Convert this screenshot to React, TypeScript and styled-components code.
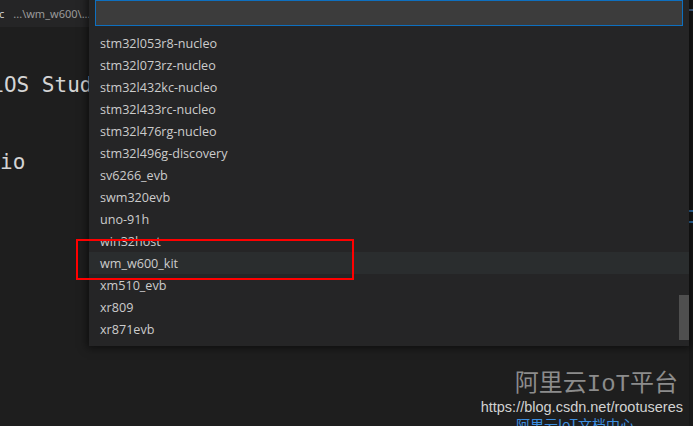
import React from "react";
import styled, { createGlobalStyle } from "styled-components";

const Global = createGlobalStyle`
  html, body { margin: 0; padding: 0; background: #1e1e1e; overflow: hidden; }
  #root { width: 693px; height: 426px; }
`;

const Screen = styled.div`
  position: relative;
  width: 693px;
  height: 426px;
  background: #1e1e1e;
  overflow: hidden;
  display: flex;
  flex-direction: column;
  font-family: "Segoe UI", "Open Sans", "Noto Sans", sans-serif;
`;

const TabBar = styled.div`
  height: 27px;
  flex: none;
  background: #252526;
  display: flex;
  align-items: center;
  font-family: "Noto Sans", sans-serif;
  font-size: 11px;
  white-space: nowrap;
  overflow: hidden;
`;

const TabName = styled.span`
  color: #d0d0d0;
  margin-left: -1px;
`;

const TabPath = styled.span`
  color: #9a9a9a;
  margin-left: 9px;
`;

const Editor = styled.div`
  flex: 1;
  display: flex;
  flex-direction: column;
  padding-top: 45px;
  gap: 51px;
  overflow: hidden;
`;

const CodeLine = styled.div<{ $indent: number }>`
  font-family: "DejaVu Sans Mono", monospace;
  font-size: 21px;
  line-height: 26px;
  color: #d4d4d4;
  white-space: pre;
  margin-left: ${(p) => p.$indent}px;
`;

const Strip = styled.div`
  position: absolute;
  right: 0;
  top: 0;
  width: 4px;
  height: 100%;
  background: #191919;
`;

const StripMark = styled.div<{ $top: number; $color: string }>`
  position: absolute;
  left: 0;
  top: ${(p) => p.$top}px;
  width: 4px;
  height: 2px;
  background: ${(p) => p.$color};
`;

const QuickPick = styled.div`
  position: absolute;
  left: 89px;
  top: -6px;
  width: 600px;
  background: #252526;
  padding: 6px 0 6px;
  box-shadow: 0 0 8px 2px rgba(0, 0, 0, 0.55);
  display: flex;
  flex-direction: column;
  gap: 6px;
`;

const InputBox = styled.div`
  margin: 0 6px;
  height: 24px;
  background: #3c3c3c;
  border: 1px solid #0e70c0;
`;

const ListArea = styled.div`
  position: relative;
  display: flex;
  flex-direction: column;
`;

const Row = styled.div<{ $active?: boolean }>`
  height: 22px;
  display: flex;
  align-items: center;
  padding-left: 11px;
  font-size: 12.6px;
  color: #cccccc;
  background: ${(p) => (p.$active ? "#2a2d2e" : "transparent")};
`;

const Thumb = styled.div`
  position: absolute;
  right: 0;
  bottom: 0;
  width: 10px;
  height: 45px;
  background: #4f4f4f;
`;

const RedBox = styled.div`
  position: absolute;
  left: 76px;
  top: 239px;
  width: 274px;
  height: 37px;
  border: 2px solid #ff0000;
`;

const Watermark = styled.div`
  position: absolute;
  right: 10px;
  bottom: -7px;
  display: flex;
  flex-direction: column;
  align-items: flex-end;
`;

const WmTitle = styled.div`
  font-family: "Liberation Mono", "Noto Sans CJK SC", monospace;
  font-size: 24px;
  line-height: 28px;
  color: #8c8c8c;
  margin-right: 5px;
`;

const WmUrl = styled.div`
  font-family: "Liberation Sans", Arial, sans-serif;
  font-size: 14.5px;
  line-height: 16px;
  color: #d2d2d2;
`;

const WmLink = styled.div`
  font-family: "Noto Sans CJK SC", sans-serif;
  font-size: 14px;
  line-height: 18px;
  color: #3d8fe0;
  margin-right: 49px;
`;

const items = [
  "stm32l053r8-nucleo",
  "stm32l073rz-nucleo",
  "stm32l432kc-nucleo",
  "stm32l433rc-nucleo",
  "stm32l476rg-nucleo",
  "stm32l496g-discovery",
  "sv6266_evb",
  "swm320evb",
  "uno-91h",
  "win32host",
  "wm_w600_kit",
  "xm510_evb",
  "xr809",
  "xr871evb",
];

export default function App() {
  return (
    <>
      <Global />
      <Screen>
        <TabBar>
          <TabName>c</TabName>
          <TabPath>...\wm_w600\...</TabPath>
        </TabBar>
        <Editor>
          <CodeLine $indent={-34}>AliOS Studio</CodeLine>
          <CodeLine $indent={0}>io</CodeLine>
        </Editor>
        <Strip>
          <StripMark $top={9} $color="#4a6f9a" />
          <StripMark $top={210} $color="#2f6fa8" />
          <StripMark $top={221} $color="#2f6fa8" />
        </Strip>
        <QuickPick>
          <InputBox />
          <ListArea>
            {items.map((it) => (
              <Row key={it} $active={it === "wm_w600_kit"}>
                {it}
              </Row>
            ))}
            <Thumb />
          </ListArea>
        </QuickPick>
        <RedBox />
        <Watermark>
          <WmTitle>阿里云IoT平台</WmTitle>
          <WmUrl>https://blog.csdn.net/rootuseres</WmUrl>
          <WmLink>阿里云IoT文档中心</WmLink>
        </Watermark>
      </Screen>
    </>
  );
}
